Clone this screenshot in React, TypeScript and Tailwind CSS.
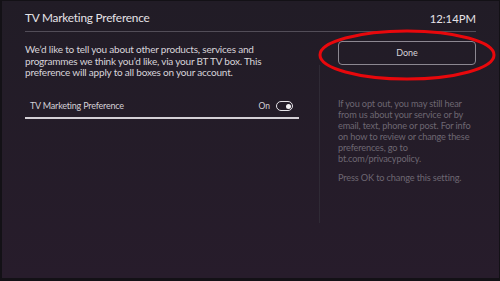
import React from "react";

const font = { fontFamily: "Lato, 'Open Sans', sans-serif" };

export default function App() {
  return (
    <div
      className="relative w-[500px] h-[281px] overflow-hidden bg-gradient-to-b from-[#211c26] to-[#271c2b] border-l-[2px] border-r border-t border-b-[3px] border-[#131116]"
      style={font}
    >
      <div className="mx-[23px] flex h-[31px] items-end justify-between border-b border-[#524d58] pb-[7px]">
        <span className="text-[11.8px] leading-none tracking-[-0.2px] text-[#e6e3e8]">TV Marketing Preference</span>
        <span className="text-[11.3px] leading-none text-[#e6e3e8]">12:14PM</span>
      </div>
      <div className="flex pl-[23px] pr-[23px]">
        <div className="w-[274px] pt-[12px]">
          <p className="text-[10px] leading-[11.5px] tracking-[-0.2px] text-[#d8d4da]">
            We’d like to tell you about other products, services and
            <br />
            programmes we think you’d like, via your BT TV box. This
            <br />
            preference will apply to all boxes on your account.
          </p>
          <div className="mt-[18px] flex h-[22px] items-center justify-between border-b-2 border-[#d4d0d6] pl-[5px] pr-[6px] pb-[1px]">
            <span className="text-[9px] tracking-[-0.2px] text-[#d4d0d6]">TV Marketing Preference</span>
            <div className="flex items-center gap-[6px]">
              <span className="text-[8.5px] text-[#d4d0d6]">On</span>
              <div className="flex h-[10px] w-[17px] items-center justify-end rounded-full border-[1.5px] border-[#e6e3e8] pr-[1.5px]">
                <div className="h-[5px] w-[5px] rounded-full bg-[#f2f0f3]"></div>
              </div>
            </div>
          </div>
        </div>
        <div className="ml-[20px] mt-[33px] h-[158px] w-px bg-[#2f2a35]"></div>
        <div className="ml-[18px] flex-1 pt-[9px]">
          <div className="flex h-[24px] items-center justify-center rounded-[4px] border border-[#8c8791] text-[9px] text-[#d6d2d8]">
            Done
          </div>
          <p className="mt-[34px] text-[9.2px] leading-[10.9px] tracking-[-0.15px] text-[#6d6772]">
            If you opt out, you may still hear
            <br />
            from us about your service or by
            <br />
            email, text, phone or post. For info
            <br />
            on how to review or change these
            <br />
            preferences, go to
            <br />
            bt.com/privacypolicy.
          </p>
          <p className="mt-[9px] text-[9.2px] leading-[10.9px] tracking-[-0.15px] text-[#6d6772]">
            Press OK to change this setting.
          </p>
        </div>
      </div>
      <svg className="pointer-events-none absolute left-0 top-0" width="500" height="281">
        <ellipse cx="405" cy="54" rx="87" ry="24" fill="none" stroke="#e8080c" strokeWidth="3" />
      </svg>
    </div>
  );
}
